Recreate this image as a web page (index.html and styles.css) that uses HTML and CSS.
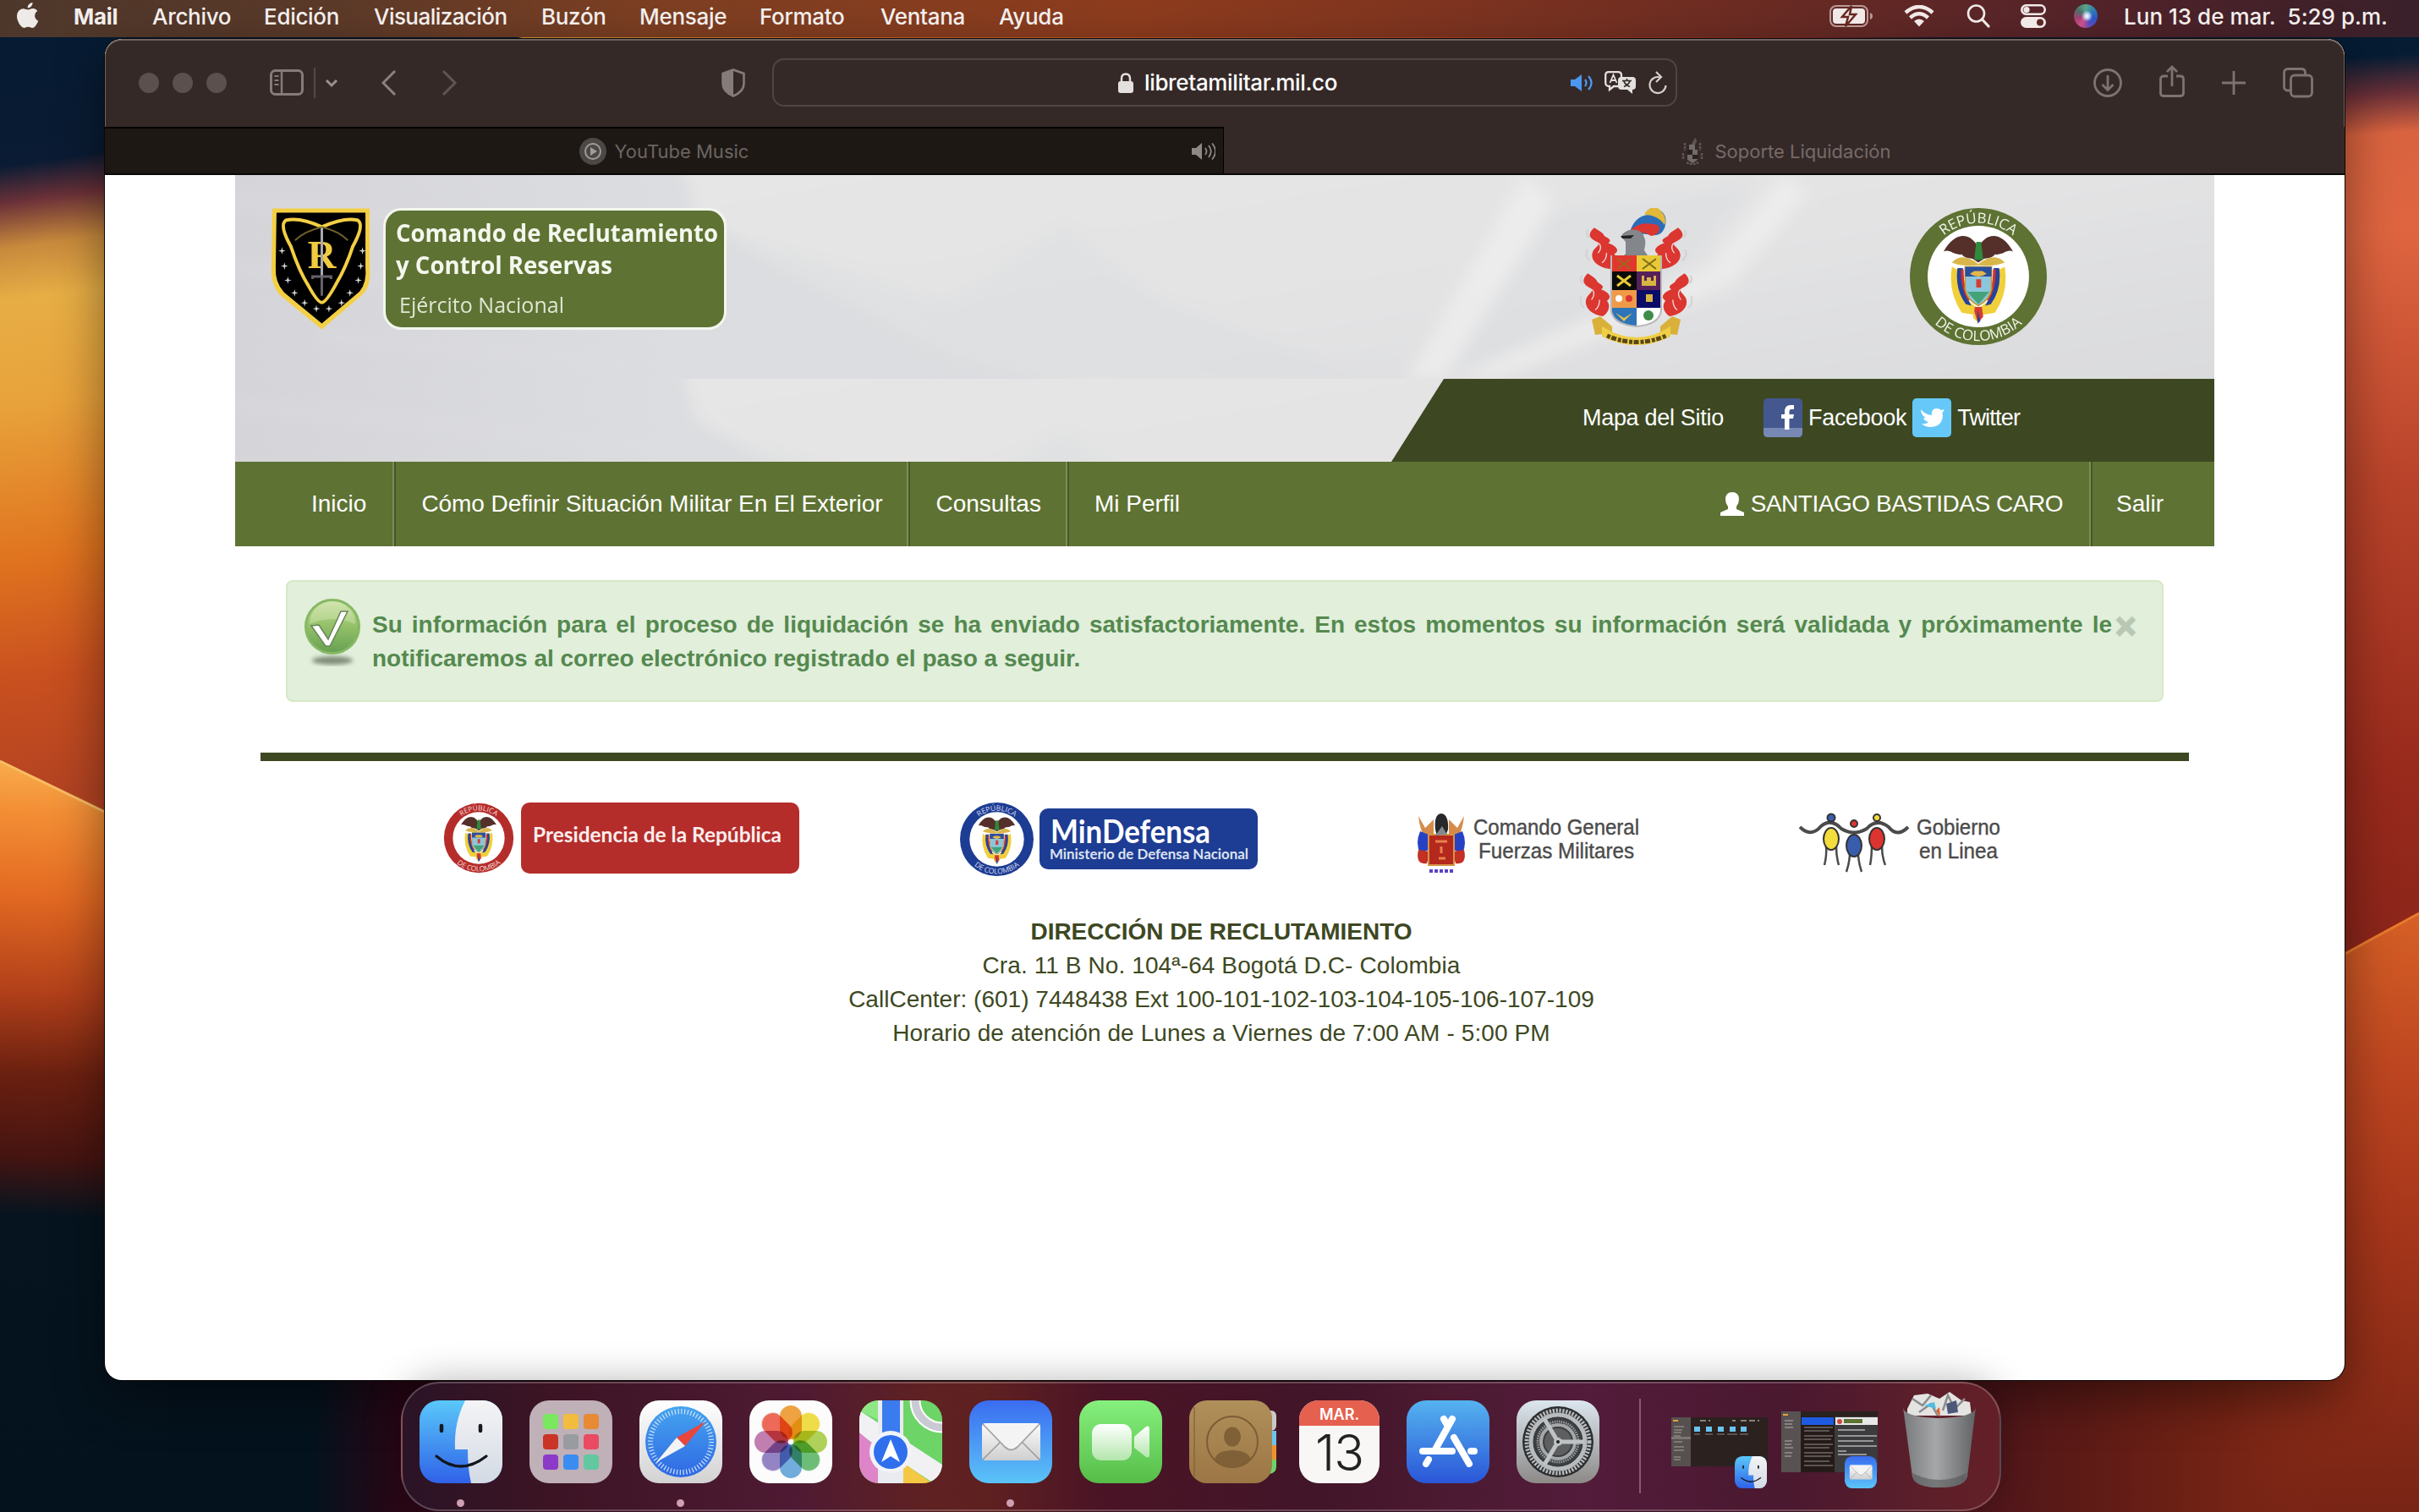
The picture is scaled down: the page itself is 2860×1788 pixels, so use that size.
FILE: index.html
```
<!DOCTYPE html>
<html lang="es">
<head>
<meta charset="utf-8">
<title>Soporte Liquidación</title>
<link rel="stylesheet" href="styles.css">
</head>
<body>
<svg class="wallpaper" viewBox="0 0 2860 1788" preserveAspectRatio="none" aria-hidden="true">
  <defs>
    <linearGradient id="wl" x1="0" y1="0" x2="0" y2="1788" gradientUnits="userSpaceOnUse">
      <stop offset="0" stop-color="#051c33"/><stop offset=".11" stop-color="#0a1b33"/><stop offset=".135" stop-color="#6b3138"/><stop offset=".165" stop-color="#c88a3c"/><stop offset=".2" stop-color="#e7ae45"/><stop offset=".27" stop-color="#e8a23b"/><stop offset=".37" stop-color="#e0741f"/><stop offset=".45" stop-color="#c9501f"/><stop offset=".53" stop-color="#b34322"/><stop offset="1" stop-color="#b34322"/>
    </linearGradient>
    <linearGradient id="wl2" x1="0" y1="905" x2="-40" y2="1788" gradientUnits="userSpaceOnUse">
      <stop offset="0" stop-color="#f8a94a"/><stop offset=".06" stop-color="#f38e35"/><stop offset=".17" stop-color="#e36a22"/><stop offset=".3" stop-color="#b2401a"/><stop offset=".41" stop-color="#6b2010"/><stop offset=".52" stop-color="#461411"/><stop offset=".6" stop-color="#06141f"/><stop offset="1" stop-color="#04121d"/>
    </linearGradient>
    <linearGradient id="wr" x1="2760" y1="0" x2="2840" y2="1150" gradientUnits="userSpaceOnUse">
      <stop offset="0" stop-color="#051c33"/><stop offset=".06" stop-color="#051c33"/><stop offset=".1" stop-color="#6b3038"/><stop offset=".14" stop-color="#d9633f"/><stop offset=".24" stop-color="#df6540"/><stop offset=".5" stop-color="#b8432a"/><stop offset=".8" stop-color="#982a1c"/><stop offset="1" stop-color="#8a241a"/>
    </linearGradient>
    <linearGradient id="wr2" x1="0" y1="1080" x2="0" y2="1788" gradientUnits="userSpaceOnUse">
      <stop offset="0" stop-color="#d66026"/><stop offset=".25" stop-color="#bf4721"/><stop offset=".5" stop-color="#a8371b"/><stop offset="1" stop-color="#782415"/>
    </linearGradient>
    <linearGradient id="wt" x1="0" x2="2860" y1="0" y2="0" gradientUnits="userSpaceOnUse">
      <stop offset="0" stop-color="#051c33"/><stop offset=".214" stop-color="#051c33"/><stop offset=".216" stop-color="#d99a3a"/><stop offset=".35" stop-color="#cf6a2a"/><stop offset=".6" stop-color="#b54424"/><stop offset=".75" stop-color="#7a2622"/><stop offset=".8" stop-color="#1c1a30"/><stop offset="1" stop-color="#051c33"/>
    </linearGradient>
    <linearGradient id="wb" x1="0" x2="2860" y1="0" y2="0" gradientUnits="userSpaceOnUse">
      <stop offset="0" stop-color="#04121d"/><stop offset=".13" stop-color="#04121d"/><stop offset=".165" stop-color="#2a0716"/><stop offset=".3" stop-color="#4a1227"/><stop offset=".4" stop-color="#641c1c"/><stop offset=".5" stop-color="#32101f"/><stop offset=".65" stop-color="#42122e"/><stop offset=".8" stop-color="#4c151f"/><stop offset=".86" stop-color="#5c1a16"/><stop offset=".92" stop-color="#742314"/><stop offset=".965" stop-color="#802817" stop-opacity="0"/>
    </linearGradient>
  </defs>
  <rect width="2860" height="1788" fill="#04121d"/>
  <rect width="1430" height="1000" fill="url(#wl)" transform="skewY(-8)"/>
  <path d="M0 900 260 1026V1788H0z" fill="url(#wl2)"/>
  <path d="M0 900 260 1026" stroke="#f9bd62" stroke-width="3"/>
  <rect x="2600" width="260" height="1788" fill="url(#wr)"/>
  <path d="M2600 1222 2860 1080V1788H2600z" fill="url(#wr2)"/>
  <path d="M2600 1222 2860 1080" stroke="#ea7a2c" stroke-width="3"/>
  <rect x="124" width="2500" height="60" fill="url(#wt)"/>
  <rect x="200" y="1610" width="2560" height="178" fill="url(#wb)"/>
</svg>

<svg class="defs" width="0" height="0" aria-hidden="true">
  <defs>
    <linearGradient id="gBlue" x2="0" y2="1"><stop stop-color="#5ac8fa"/><stop offset="1" stop-color="#2f62e8"/></linearGradient>
    <linearGradient id="gWhite" x2="0" y2="1"><stop stop-color="#f4f4f6"/><stop offset="1" stop-color="#d3dae4"/></linearGradient>
    <linearGradient id="gMail" x2="0" y2="1"><stop stop-color="#3a6cf0"/><stop offset="1" stop-color="#5bc4f8"/></linearGradient>
    <linearGradient id="gEnv" x2="0" y2="1"><stop stop-color="#fcfcfc"/><stop offset="1" stop-color="#cfcfcf"/></linearGradient>
    <linearGradient id="gGreen" x2="0" y2="1"><stop stop-color="#86f07e"/><stop offset="1" stop-color="#56bd48"/></linearGradient>
    <linearGradient id="gCam" x2="0" y2="1"><stop stop-color="#fff"/><stop offset="1" stop-color="#b4e6ad"/></linearGradient>
    <linearGradient id="gStore" x2="0" y2="1"><stop stop-color="#55b3f0"/><stop offset="1" stop-color="#2a56d8"/></linearGradient>
    <linearGradient id="gSet" x2="0" y2="1"><stop stop-color="#dbe6ee"/><stop offset="1" stop-color="#8d8a88"/></linearGradient>
    <linearGradient id="gSaf" x2="0" y2="1"><stop stop-color="#fff"/><stop offset="1" stop-color="#d2d2d2"/></linearGradient>
    <linearGradient id="gDial" x2="0" y2="1"><stop stop-color="#45a4ef"/><stop offset="1" stop-color="#2f68e4"/></linearGradient>
    <linearGradient id="gTan" x2="0" y2="1"><stop stop-color="#b0905a"/><stop offset="1" stop-color="#9c7645"/></linearGradient>
    <linearGradient id="gCan" x2="1" y2="0"><stop stop-color="#77797b"/><stop offset=".45" stop-color="#a5a7a8"/><stop offset="1" stop-color="#606264"/></linearGradient>
    <linearGradient id="gOk" x2="0" y2="1"><stop stop-color="#c9e0a0"/><stop offset=".45" stop-color="#97c36b"/><stop offset="1" stop-color="#66a052"/></linearGradient>
    <filter id="soft" x="-30%" y="-60%" width="160%" height="220%"><feGaussianBlur stdDeviation="2.5"/></filter>
    <clipPath id="tile"><rect width="98" height="98" rx="23"/></clipPath>
    <symbol id="finder" viewBox="0 0 98 98">
      <g clip-path="url(#tile)"><rect width="98" height="98" fill="url(#gBlue)"/>
      <path d="M54 0H98V98H61C58 85 57 72 57 58H42C41 36 45 18 54 0z" fill="url(#gWhite)"/></g>
      <path d="M26 30v6M72 30v6" stroke="#15191f" stroke-width="4.500" stroke-linecap="round"/>
      <path d="M20 66Q48 90 79 66" fill="none" stroke="#12161c" stroke-width="3.200" stroke-linecap="round"/>
    </symbol>
    <symbol id="mail" viewBox="0 0 98 98">
      <rect width="98" height="98" rx="23" fill="url(#gMail)"/>
      <rect x="15" y="27" width="69" height="44" rx="4" fill="url(#gEnv)"/>
      <path d="M16 70 37 49M83 70 62 49" stroke="#9a9a9a" stroke-width="1.500"/>
      <path d="M16 28 42 55Q49.500 62 57 55L83 28" fill="#f4f4f4" stroke="#a5a5a5" stroke-width="1.800"/>
    </symbol>
    <symbol id="arms" viewBox="0 0 100 140">
      <path d="M50 24C40 4 18 -2 0 30 10 26 14 36 26 34 32 42 40 38 44 42L50 46 56 42C60 38 68 42 74 34 86 36 90 26 100 30 82 -2 60 4 50 24z" fill="#55302a"/>
      <path d="M47 16h7l3 26H44z" fill="#2f8a3c"/>
      <path d="M12 46Q26 30 50 48 74 30 88 46 74 52 50 50 26 52 12 46z" fill="#d9b64a"/>
      <path d="M12 52Q6 88 26 118L50 122 74 118Q94 88 88 52L72 60V96L50 112 28 96V60z" fill="#f0cf3a"/>
      <path d="M20 54Q16 84 32 106L40 108Q26 84 28 54zM80 54Q84 84 68 106L60 108Q74 84 72 54z" fill="#24439c"/>
      <path d="M27 56Q26 82 37 100M73 56Q74 82 63 100" stroke="#cf3030" stroke-width="4" fill="none"/>
      <path d="M31 52H69V84Q66 100 50 108 34 100 31 84z" fill="#8cc6dc" stroke="#c59a36" stroke-width="2"/>
      <path d="M31 52H69V66H31z" fill="#2a4f9e"/><path d="M38 62Q50 70 62 62L56 58H44z" fill="#e2b74a"/>
      <path d="M47 70h7v12h-7z" fill="#d63a32"/><path d="M34 88H66L50 106z" fill="#44a377"/>
      <path d="M45 110h10l2 14-7 8-7-8z" fill="#d63a32"/><path d="M43 112l6 20-6-6z" fill="#f0cf3a"/><path d="M49 114v20l4-4z" fill="#24439c"/>
    </symbol>
    <path id="ringTop" d="M22 100A78 78 0 0 1 178 100"/>
    <path id="ringBottom" d="M6 100A94 94 0 0 0 194 100"/>
    <symbol id="star" viewBox="-5 -5 10 10"><path d="M0-4 .8-.8 4 0 .8.8 0 4-.8.8-4 0-.8-.8z" fill="#d9dadc"/></symbol>
    <symbol id="flame" viewBox="0 0 44 80" preserveAspectRatio="none">
      <path d="M12 2C2 14 6 22 16 28 22 32 12 38 10 46 6 60 16 74 32 77 40 72 44 58 38 50 48 42 36 32 30 30 38 22 24 20 24 14 20 8 16 6 12 2z" fill="#dc3630"/>
      <path d="M4 6q-4 8 2 14M3 42q-4 12 4 20" stroke="#d4d4d4" stroke-width="3" fill="none"/>
      <path d="M18 30q5 8-1 18M28 48q0 12-6 18" stroke="#f3e0df" stroke-width="1.500" fill="none"/>
    </symbol>
    <symbol id="speaker" viewBox="0 0 28 22"><path d="M0 7h5L12 1v20L5 15H0z"/><path d="M16 7q3 4 0 8M20 4q5.500 7 0 14M24 1.500q8 9.500 0 19" fill="none" stroke="currentColor" stroke-width="1.800"/></symbol>
  </defs>
</svg>

<header class="menubar">
  <svg class="apple" viewBox="0 0 26 32"><path d="M18.500 0c.3 3.500-2.600 6.600-5.800 6.500C12.300 3.300 15.300.3 18.500 0zM13.400 8.600c1.400 0 3-1.500 5.400-1.500 2.200.1 4.300 1.200 5.500 3-4.700 3-3.900 9.600.9 11.600-1 2.700-4 8.300-7 8.300-2 0-2.700-1.200-4.900-1.200S10.400 30 8.500 30C4.600 30 0 22 0 16.600 0 10.700 3.700 7.400 7.300 7.300c2.300 0 4.500 1.300 6.100 1.300z" fill="#eeeae8"/></svg>
  <nav class="menus">
    <b>Mail</b><span>Archivo</span><span>Edición</span><span class="tight">Visualización</span><span>Buzón</span><span>Mensaje</span><span>Formato</span><span>Ventana</span><span>Ayuda</span>
  </nav>
  <div class="status">
    <svg width="52" height="26" viewBox="0 0 52 26"><rect x="1" y="1" width="44" height="24" rx="7" fill="none" stroke="#b79a97" stroke-width="2"/><rect x="4" y="4" width="38" height="18" rx="4" fill="#f1e9e8"/><path d="M48 9v8q3-1 3-4t-3-4z" fill="#b79a97"/><path d="M26 1 15 14h7l-3 11 12-14h-7z" fill="#f1e9e8" stroke="#67281f" stroke-width="2.500"/></svg>
    <svg width="36" height="26" viewBox="0 0 36 26"><path d="M2 9Q18-5 34 9M7.500 15Q18 5.500 28.500 15" stroke="#f1e9e8" stroke-width="4.500" fill="none"/><path d="M12 19q6-5 12 0l-6 6.500z" fill="#f1e9e8"/></svg>
    <svg width="28" height="28" viewBox="0 0 28 28" fill="none" stroke="#f1e9e8"><circle cx="11.500" cy="11" r="9.500" stroke-width="2.600"/><path d="M18.500 18 26 26" stroke-width="3.200" stroke-linecap="round"/></svg>
    <svg width="30" height="28" viewBox="0 0 30 28"><rect x="1.300" y="1.300" width="27.400" height="10.400" rx="5.200" fill="none" stroke="#f1e9e8" stroke-width="2.600"/><circle cx="7" cy="6.500" r="3.600" fill="#f1e9e8"/><rect y="15" width="30" height="13" rx="6.500" fill="#f1e9e8"/><circle cx="23" cy="21.500" r="4" fill="#5d2726"/></svg>
    <i class="siri"></i>
    <span class="clock">Lun 13 de mar.&nbsp; 5:29 p.m.</span>
  </div>
</header>

<main class="window">
  <div class="toolbar">
    <div class="lights"><i></i><i></i><i></i></div>
    <svg class="tb-side" viewBox="0 0 82 36" fill="none" stroke="#81777a"><g stroke="#857b79"><rect x="1.500" y="3.500" width="37" height="28" rx="5" stroke-width="3"/><path d="M14 4v27" stroke-width="2.500"/><path d="M5.500 10h5M5.500 15h5M5.500 20h5" stroke-width="2"/></g><path d="M53 0v36" stroke="#53484a" stroke-width="2"/><path d="M67 15l6 6 6-6" stroke="#9a908e" stroke-width="3"/></svg>
    <svg class="tb-nav" viewBox="0 0 90 30" fill="none" stroke-width="3"><path d="M16 1 2 15 16 29" stroke="#8a807e"/><path d="M73 1 87 15 73 29" stroke="#5f5452"/></svg>
    <svg class="tb-shield" viewBox="0 0 28 34"><path d="M14 1.500 26.500 6V18q0 9-12.500 14.500Q1.500 27 1.500 18V6z" fill="none" stroke="#857b79" stroke-width="2.600"/><path d="M14 1.500V32.500Q1.500 27 1.500 18V6z" fill="#857b79"/></svg>
    <div class="urlbar">
      <svg class="lock" viewBox="0 0 18 24"><rect y="10" width="18" height="14" rx="3" fill="#e4e0df"/><path d="M4 11V7q0-5.500 5-5.500T14 7v4" fill="none" stroke="#e4e0df" stroke-width="2.400"/></svg>
      <span>libretamilitar.mil.co</span>
      <div class="urlicons">
        <svg width="28" height="22" viewBox="0 0 28 22" fill="#4b97f3"><path d="M0 7h5L13 1v20L5 15H0z"/><path d="M17 7q3 4 0 8M21 3q7 8 0 16" fill="none" stroke="#4b97f3" stroke-width="2.200"/></svg>
        <svg width="37" height="27" viewBox="0 0 37 27"><path d="M5 1.200H16Q20 1.200 20 5V15Q20 18 16 18H11L6 22V18Q1.200 18 1.200 14V5Q1.200 1.200 5 1.200z" fill="none" stroke="#e4e0df" stroke-width="2.300"/><path d="M6.500 14 10.500 4.500 14.500 14M8 11h5" stroke="#e4e0df" stroke-width="1.800" fill="none"/><path d="M20 7H33Q37 7 37 11V18Q37 22 33 22V27L27 22H20Q16 22 16 18V11Q16 7 20 7z" fill="#e4e0df"/><path d="M21 11.500H32M26.500 9v2.500M23 18.500Q29 16 30 11.500M23 12q1.500 4.500 7 6.500" stroke="#352928" stroke-width="1.700" fill="none"/></svg>
        <svg width="22" height="28" viewBox="0 0 22 28" fill="none" stroke="#d5cfce" stroke-width="2.200"><path d="M14 7.500A9.500 9.500 0 1 0 20.500 17"/><path d="M9 1l6 6-6 6"/></svg>
      </div>
    </div>
    <div class="tb-right">
      <svg width="34" height="34" viewBox="0 0 34 34"><circle cx="17" cy="17" r="15.500"/><path d="M17 8v17M10.500 19l6.500 6.500 6.500-6.500"/></svg>
      <svg class="share" width="30" height="38" viewBox="0 0 30 38"><path d="M10 13H5Q1.500 13 1.500 16.500V33Q1.500 36.500 5 36.500H25Q28.500 36.500 28.500 33V16.500Q28.500 13 25 13H20M15 25V2M9 8l6-6 6 6"/></svg>
      <svg width="28" height="28" viewBox="0 0 28 28"><path d="M14 0V28M0 14H28"/></svg>
      <svg width="36" height="36" viewBox="0 0 36 36"><path d="M9 27H6Q1.500 27 1.500 22.500V6Q1.500 1.500 6 1.500H22Q26.500 1.500 26.500 6V9"/><rect x="9.500" y="9" width="25" height="25" rx="4.500"/></svg>
    </div>
  </div>
  <div class="tabs">
    <div class="tab tab-a">
      <svg width="32" height="32" viewBox="0 0 32 32"><circle cx="16" cy="16" r="16" fill="#4c4845"/><circle cx="16" cy="16" r="9" fill="none" stroke="#a09c9a" stroke-width="2"/><path d="M13 11v10l8-5z" fill="#a09c9a"/></svg>
      <span>YouTube Music</span>
      <svg class="sound" width="28" height="22" fill="#8e8986" color="#8e8986"><use href="#speaker"/></svg>
    </div>
    <div class="tab tab-b">
      <svg width="26" height="32" viewBox="0 0 26 32"><path d="M16 0q4 3 0 8l-5 1z" fill="#5a5554"/><path d="M9 8h7v6H9zM7 14h12v12l-6 4-6-4z" fill="#716b6a"/><path d="M7 14h6v6H7zM13 20h6v5h-6z" fill="#2a2120"/><path d="M4 6v9M22 6v9M2 18v8M24 18v8M6 29q7 4 14 0" stroke="#5d5655" stroke-width="2.500" fill="none" stroke-dasharray="3 1"/></svg>
      <span>Soporte Liquidación</span>
    </div>
  </div>

  <div class="site">
    <header class="banner">
      <svg class="banner-bg" viewBox="0 0 2340 339" preserveAspectRatio="none" aria-hidden="true">
        <defs>
          <linearGradient id="bg1" x2="1" y2="0"><stop stop-color="#d5d5d9"/><stop offset=".22" stop-color="#dcdde0"/><stop offset="1" stop-color="#dcdddf"/></linearGradient>
          <linearGradient id="bg2" x2="1" y2="1"><stop stop-color="#e6e6e6"/><stop offset=".5" stop-color="#e3e3e4"/><stop offset="1" stop-color="#d8d9dc"/></linearGradient>
          <filter id="fold" x="-5%" y="-20%" width="110%" height="140%"><feGaussianBlur stdDeviation="9"/></filter>
          <clipPath id="band"><rect width="2340" height="241"/></clipPath>
        </defs>
        <g id="folds" clip-path="url(#band)"><rect width="2340" height="241" fill="url(#bg1)"/>
          <g filter="url(#fold)">
            <path d="M0 30 500 80M0 110 500 160M100 190 480 225" stroke="#dfdfe3" stroke-width="14" opacity=".4"/>
            <path d="M520 -40H2400V290H1150L860 215 640 110 545 50z" fill="url(#bg2)"/>
            <path d="M560 60 700 150 860 241H1340L1100 150 980 60 840 150z" fill="#dcdddf" opacity=".5"/>
            <path d="M1525 0 1385 241H1430L1560 30zM1830 0 1740 110 1440 241H1490L1770 130 1860 20z" fill="#efefef" opacity=".7"/>
            <path d="M1560 40 1430 241 1700 120 1800 10z" fill="#dcdddf" opacity=".5"/>
          </g>
        </g>
        <use href="#folds" y="241"/>
      </svg>
      <div class="brand-row">
        <svg class="rshield" viewBox="0 0 120 144">
          <path d="M2 0H118V70Q120 92 110 102L61 144 12 104Q0 92 1 70z" fill="#f3cf43"/><path d="M7 5H113V70Q115 88 106 99L61 137 16 100Q5 88 6 70z" fill="#000"/>
          <path d="M61 22Q35 10 18 14 10 20 24 45 34 75 45 92 56 112 61 112 66 112 78 90 90 70 98 45 112 20 104 14 88 10 61 22Z" fill="none" stroke="#f3cf43" stroke-width="4"/>
          <path d="M61 22Q40 27 29 38M61 22Q82 27 92 38" stroke="#6f602c" stroke-width="2" fill="none"/>
          <text x="61" y="71" font-family="Liberation Serif, serif" font-weight="700" font-size="47" text-anchor="middle" fill="#f0cb42">R</text>
          <path d="M61 23v60" stroke="#aaa9ae" stroke-width="3"/><path d="M61 80v24M50 84v-3h22v3" stroke="#66616a" stroke-width="3" fill="none"/>
          <g><use href="#star" x="8" y="45" width="11" height="11"/><use href="#star" x="11" y="63" width="11" height="11"/><use href="#star" x="15" y="80" width="11" height="11"/><use href="#star" x="23" y="95" width="11" height="11"/><use href="#star" x="35" y="107" width="11" height="11"/><use href="#star" x="49" y="114" width="11" height="11"/><use href="#star" x="64" y="114" width="11" height="11"/><use href="#star" x="79" y="107" width="11" height="11"/><use href="#star" x="89" y="95" width="11" height="11"/><use href="#star" x="99" y="80" width="11" height="11"/><use href="#star" x="102" y="63" width="11" height="11"/><use href="#star" x="104" y="45" width="11" height="11"/></g>
        </svg>
        <svg class="brand" viewBox="0 0 406 144"><rect x="1.500" y="1.500" width="403" height="141" rx="20" fill="#5e7233" stroke="#f3f6ee" stroke-width="3"/>
          <g fill="#f4f7ee" font-family="Open Sans, sans-serif"><text x="15" y="40" font-size="28" font-weight="700" textLength="381" lengthAdjust="spacingAndGlyphs">Comando de Reclutamiento</text><text x="15" y="78" font-size="28" font-weight="700" textLength="256" lengthAdjust="spacingAndGlyphs">y Control Reservas</text><text x="19" y="124" font-size="25" fill="#dfe6d2" textLength="195" lengthAdjust="spacingAndGlyphs">Ejército Nacional</text></g></svg>
        <svg class="army" viewBox="0 0 133 162">
          <path d="M60 25Q66 10 80 8 78 0 88 0 104 4 101 20 98 34 84 32 70 28 60 36z" fill="#2b6db8"/><path d="M76 8Q80-2 92 0 104 10 100 20 92 8 76 8z" fill="#e2b93a"/><path d="M58 28Q70 14 92 20 98 30 84 33 72 24 58 36z" fill="#dc3630"/>
          <path d="M54 54V40Q48 34 50 31 60 22 72 28 80 36 76 50L80 56H52z" fill="#83868a"/><path d="M48 33 64 32 60 36H50z" fill="#222"/>
          <use href="#flame" x="6" y="22" width="40" height="52"/><use href="#flame" x="-1" y="76" width="38" height="54"/>
          <g transform="matrix(-1 0 0 1 133 0)"><use href="#flame" x="6" y="22" width="40" height="52"/><use href="#flame" x="-1" y="76" width="38" height="54"/></g>
          <g><path d="M37 56H67V75H37z" fill="#e2372f"/><path d="M67 56H96V75H67z" fill="#e9ca36"/><path d="M37 75H67V97H37z" fill="#0a0a0a"/><path d="M67 75H96V97H67z" fill="#56205c"/><path d="M37 97H67V118H37z" fill="#f09a48"/><path d="M67 97H96V118H67z" fill="#0b0c68"/><path d="M37 118H67V140Q40 136 37 122z" fill="#2e74b8"/><path d="M67 118H96Q96 136 67 140z" fill="#fff"/></g>
          <g stroke-width="2"><path d="M44 60 60 72M60 60 44 72" stroke="#9a6a1c"/><path d="M74 60 90 72M90 60 74 72" stroke="#7d6a1c"/><path d="M44 80 60 92M60 80 44 92" stroke="#e9ca36" stroke-width="3"/></g>
          <path d="M73 92V80h3v6h3v-4h5v4h3v-6h3v12zM78 102h8v9h-8z" fill="#d8b442"/><circle cx="46" cy="107" r="4" fill="#fff"/><circle cx="58" cy="107" r="4" fill="#d33"/><path d="M42 124 52 130 62 124 52 134z" fill="#e2c14a"/><circle cx="81" cy="127" r="6" fill="#3f8c4b"/>
          <path d="M37 56V122Q40 138 67 140 93 138 96 122V56" stroke="#b8b8b8" stroke-width="2" fill="none"/>
          <path d="M14 132 24 128 38 140 38 148 18 150zM119 132 109 128 95 140 95 148 115 150z" fill="#d9b13a"/><path d="M26 140Q67 166 107 140V152Q67 172 26 152z" fill="#efcf48"/><path d="M32 151Q67 166 102 151" stroke="#5a4716" stroke-width="5" stroke-dasharray="4 1.500 6 2" fill="none"/>
        </svg>
        <svg class="seal" viewBox="0 0 200 200"><circle cx="100" cy="100" r="100" fill="#5e7233"/><circle cx="100" cy="100" r="74" fill="#fff"/><g fill="#f1f4ea" font-family="Open Sans, sans-serif" font-size="21"><text text-anchor="middle"><textPath href="#ringTop" startOffset="50%">REPÚBLICA</textPath></text><text text-anchor="middle"><textPath href="#ringBottom" startOffset="50%">DE COLOMBIA</textPath></text></g><use href="#arms" x="34" y="33" width="132" height="142"/></svg>
      </div>
      <div class="social">
        <a>Mapa del Sitio</a>
        <svg class="fb" viewBox="0 0 46 46"><rect width="46" height="46" rx="5" fill="#44588f"/><path d="M0 35H46V41Q46 46 41 46H5Q0 46 0 41z" fill="#7788b5"/><path d="M25 37V24h-4v-5h4v-3q0-8 7-8h4v5h-3q-2.500 0-2.500 3v3h5.500l-1 5h-4.500v13z" fill="#fff"/></svg>
        <a>Facebook</a>
        <svg class="tw" viewBox="0 0 46 46"><rect width="46" height="46" rx="5" fill="#66c8f9"/><path d="M10 13q6 7 13 7-1-8 6-8 3 0 5 2l4-1-3 5 1 1q0 14-14 15-7 0-11-4 5 1 8-2-5-1-6-5h3q-6-3-6-10z" fill="#fff"/></svg>
        <a class="tight">Twitter</a>
      </div>
    </header>
    <nav class="mainnav">
      <a class="item">Inicio</a><a class="item wide">Cómo Definir Situación Militar En El Exterior</a><a class="item">Consultas</a><a class="item last">Mi Perfil</a>
      <span class="grow"></span>
      <a class="item user"><svg viewBox="0 0 28 28"><path d="M14 0q8 0 8 8.500 0 4.500-3 8.500v3l9 4v4H0v-4l9-4v-3Q6 13 6 8.500 6 0 14 0z" fill="#fff"/></svg>SANTIAGO BASTIDAS CARO</a><a class="item last">Salir</a>
    </nav>
    <section class="alert">
      <svg class="ok" viewBox="0 0 66 80"><ellipse cx="33" cy="73" rx="24" ry="5" fill="#7f8d79" filter="url(#soft)"/><circle cx="33" cy="33" r="31.500" fill="url(#gOk)" stroke="#86b863" stroke-width="3"/><path d="M6 30A27 27 0 0 1 60 30Q33 18 6 30z" fill="#e1edc6" opacity=".35"/><path d="M8 32 17 31 28 48 43 15 51 15 30 56 25 56z" fill="#fff" stroke="#67855a" stroke-width="1.500"/></svg>
      <p>Su información para el proceso de liquidación se ha enviado satisfactoriamente. En estos momentos su información será validada y próximamente le notificaremos al correo electrónico registrado el paso a seguir.</p>
      <b class="close">×</b>
    </section>
    <hr class="rule">
    <div class="logos">
      <svg class="l1" viewBox="0 0 421 88"><g transform="translate(0 2) scale(.42)"><circle cx="100" cy="100" r="98" fill="#b52d2b"/><circle cx="100" cy="100" r="73" fill="#fff"/><g fill="#f6dcda" font-family="Open Sans, sans-serif" font-size="20"><text text-anchor="middle"><textPath href="#ringTop" startOffset="50%">REPÚBLICA</textPath></text><text text-anchor="middle"><textPath href="#ringBottom" startOffset="50%">DE COLOMBIA</textPath></text></g><use href="#arms" x="34" y="33" width="132" height="140"/></g><rect x="92" y="2" width="329" height="84" rx="10" fill="#b52d2b"/><text x="106" y="49" font-family="Lato, sans-serif" font-weight="700" font-size="25" fill="#fbeeee" textLength="294" lengthAdjust="spacingAndGlyphs">Presidencia de la República</text></svg>
      <svg class="l2" viewBox="0 0 352 88"><g transform="scale(.435)"><circle cx="100" cy="100" r="100" fill="#1d3c93"/><circle cx="100" cy="100" r="74" fill="#fff"/><g fill="#d8def0" font-family="Open Sans, sans-serif" font-size="20"><text text-anchor="middle"><textPath href="#ringTop" startOffset="50%">REPÚBLICA</textPath></text><text text-anchor="middle"><textPath href="#ringBottom" startOffset="50%">DE COLOMBIA</textPath></text></g><use href="#arms" x="34" y="33" width="132" height="140"/></g><rect x="94" y="7" width="258" height="72" rx="10" fill="#1d3c93"/><g fill="#fff" font-family="Lato, sans-serif"><text x="107" y="48" font-weight="700" font-size="38" textLength="189" lengthAdjust="spacingAndGlyphs">MinDefensa</text><text x="106" y="67" font-size="17" font-weight="700" fill="#dce2f2" textLength="235" lengthAdjust="spacingAndGlyphs">Ministerio de Defensa Nacional</text></g></svg>
      <svg class="l3" viewBox="0 0 264 72"><path d="M2 4Q4 24 12 32L20 26V8L10 18zM56 4Q54 24 46 32L38 26V8L48 18z" fill="#d58b4a"/><path d="M4 22Q-2 36 4 48L14 44V26zM54 22Q60 36 54 48L44 44V26z" fill="#2741c4"/><path d="M2 44Q-2 62 12 60L16 46zM56 44Q60 62 46 60L42 46z" fill="#c33024"/><path d="M22 20Q20 2 29 1 38 2 37 20L34 28H24z" fill="#26282b"/><path d="M14 26H44V62H14z" fill="#b4281d" stroke="#d79346" stroke-width="2"/><path d="M22 27 30 16 36 26z" fill="#85888c"/><path d="M22 34h14M26 54h8M29 40v8" stroke="#e8814a" stroke-width="3"/><path d="M15 69h29" stroke="#5a42c8" stroke-width="4" stroke-dasharray="4 2"/><g font-family="Liberation Sans, sans-serif" font-size="25" fill="#4b4b4b" stroke="#4b4b4b" stroke-width=".4"><text x="67" y="26" textLength="196" lengthAdjust="spacingAndGlyphs">Comando General</text><text x="73" y="54" textLength="184" lengthAdjust="spacingAndGlyphs">Fuerzas Militares</text></g></svg>
      <svg class="l4" viewBox="0 0 240 72"><g stroke="#333" stroke-width="2" fill="none"><path d="M1 17Q14 30 26 16 38 6 50 19 65 28 80 19 92 6 106 17 116 30 129 17" stroke="#4b4b4b" stroke-width="4"/><path d="M32 40Q33 50 30 62M44 40Q44 52 47 62M60 48Q60 58 56 70M70 48Q70 58 74 70M86 40Q86 52 84 62M98 40Q98 52 102 62" stroke="#4b4b4b" stroke-width="2.500"/><ellipse cx="38" cy="31" rx="9" ry="13" fill="#f4dc3c"/><ellipse cx="65" cy="39" rx="9" ry="13" fill="#3a5cad"/><ellipse cx="92" cy="31" rx="9" ry="13" fill="#dd342f"/><circle cx="38" cy="6" r="4.500" fill="#3a5cad"/><circle cx="65" cy="13" r="4" fill="#dd342f"/><circle cx="92" cy="6" r="4" fill="#f4dc3c"/></g><g font-family="Liberation Sans, sans-serif" font-size="25" fill="#4b4b4b" stroke="#4b4b4b" stroke-width=".4"><text x="139" y="26" textLength="99" lengthAdjust="spacingAndGlyphs">Gobierno</text><text x="142" y="54" textLength="93" lengthAdjust="spacingAndGlyphs">en Linea</text></g></svg>
    </div>
    <address class="contact">
      <b>DIRECCIÓN DE RECLUTAMIENTO</b>
      <span>Cra. 11 B No. 104ª-64 Bogotá D.C- Colombia</span>
      <span class="phone">CallCenter: (601) 7448438 Ext 100-101-102-103-104-105-106-107-109</span>
      <span>Horario de atención de Lunes a Viernes de 7:00 AM - 5:00 PM</span>
    </address>
  </div>
</main>

<footer class="dock">
  <div class="app on"><svg viewBox="0 0 98 98"><use href="#finder"/></svg></div>
  <div class="app"><div class="launchpad"><i class="c1"></i><i class="c2"></i><i class="c3"></i><i class="c4"></i><i class="c5"></i><i class="c6"></i><i class="c7"></i><i class="c8"></i><i class="c9"></i></div></div>
  <div class="app on"><svg viewBox="0 0 98 98"><rect width="98" height="98" rx="23" fill="url(#gSaf)"/><circle cx="49" cy="49" r="42" fill="url(#gDial)"/><circle cx="49" cy="49" r="36" fill="none" stroke="#cfe3fa" stroke-width="6" stroke-dasharray="1.200 2.570"/><path d="M78 25 54 54 44 44z" fill="#e8463c"/><path d="M20 73 44 44 54 54z" fill="#f4f4f4"/></svg></div>
  <div class="app"><svg viewBox="0 0 98 98"><rect width="98" height="98" rx="23" fill="#fcfcfc"/><g transform="translate(49 49)" class="petals"><rect x="-13" y="-43" width="26" height="40" rx="13" fill="#f09a2d"/><rect x="-13" y="-43" width="26" height="40" rx="13" fill="#f0dc34" transform="rotate(45)"/><rect x="-13" y="-43" width="26" height="40" rx="13" fill="#a9cf47" transform="rotate(90)"/><rect x="-13" y="-43" width="26" height="40" rx="13" fill="#5fb868" transform="rotate(135)"/><rect x="-13" y="-43" width="26" height="40" rx="13" fill="#62a5dc" transform="rotate(180)"/><rect x="-13" y="-43" width="26" height="40" rx="13" fill="#8a78c0" transform="rotate(225)"/><rect x="-13" y="-43" width="26" height="40" rx="13" fill="#bd70a8" transform="rotate(270)"/><rect x="-13" y="-43" width="26" height="40" rx="13" fill="#ee5a45" transform="rotate(315)"/></g></svg></div>
  <div class="app"><svg viewBox="0 0 98 98"><g clip-path="url(#tile)"><rect width="98" height="98" fill="#6dd467"/><path d="M0 0H24V24L0 12z" fill="#8fe684"/><path d="M0 12 98 76V98H88L0 40z" fill="#f1f1f4"/><path d="M0 38 24 58V98H0z" fill="#dd85c8"/><path d="M22 0H52V98H22z" fill="#e9ebf0"/><path d="M27 0H48V50H27z" fill="#3b7bf0"/><path d="M52 74 86 98H52z" fill="#f5c843"/><circle cx="98" cy="0" r="32" fill="none" stroke="#fff" stroke-width="13"/><circle cx="98" cy="0" r="32" fill="none" stroke="#c9cad3" stroke-width="9"/></g><circle cx="37" cy="61" r="25" fill="#f1f3f8"/><circle cx="37" cy="61" r="20" fill="#2f6fee"/><path d="M37 46 48 73 37 66 26 73z" fill="#fff"/></svg></div>
  <div class="app on"><svg viewBox="0 0 98 98"><use href="#mail"/></svg></div>
  <div class="app"><svg viewBox="0 0 98 98"><rect width="98" height="98" rx="23" fill="url(#gGreen)"/><rect x="15" y="28" width="47" height="43" rx="11" fill="url(#gCam)"/><path d="M65 43 79 31Q83 29 83 34V64Q83 69 79 67L65 56z" fill="url(#gCam)"/></svg></div>
  <div class="app"><svg viewBox="0 0 104 98"><rect x="80" y="12" width="23" height="24" rx="6" fill="#c9c9c9"/><rect x="80" y="36" width="23" height="17" fill="#6cc3ec"/><rect x="80" y="53" width="23" height="17" fill="#f0922c"/><path d="M80 70h23v8q0 8-8 9H80z" fill="#6cd46a"/><rect width="98" height="98" rx="21" fill="url(#gTan)"/><path d="M6 8V90" stroke="#80603a" stroke-width="2" opacity=".6"/><circle cx="51" cy="49" r="30" fill="none" stroke="#7c5d34" stroke-width="2"/><ellipse cx="51" cy="43" rx="10" ry="11.500" fill="#7f6037"/><path d="M30 69Q34 59 51 59T73 69Q63 79 51 79T30 69z" fill="#7f6037"/></svg></div>
  <div class="app cal"><b>MAR.</b><span>13</span></div>
  <div class="app"><svg viewBox="0 0 98 98"><rect width="98" height="98" rx="23" fill="url(#gStore)"/><g stroke="#fff" stroke-width="8" stroke-linecap="round"><path d="M54 22 34 58M44 22 48 29M56 44 74 75M19 60H54M76 60H80M26 70 23 75"/></g></svg></div>
  <div class="app"><svg viewBox="0 0 98 98"><rect width="98" height="98" rx="23" fill="url(#gSet)"/><circle cx="49" cy="49" r="42" fill="#2b2d2f"/><circle cx="49" cy="49" r="37" fill="none" stroke="#b8bbbd" stroke-width="5" stroke-dasharray="2.300 1.600"/><circle cx="49" cy="49" r="32" fill="none" stroke="#b8bbbd" stroke-width="5"/><circle cx="49" cy="49" r="29" fill="#3c3e40"/><circle cx="49" cy="49" r="24" fill="none" stroke="#989b9d" stroke-width="3" stroke-dasharray="1.500 1.200"/><circle cx="49" cy="49" r="20" fill="none" stroke="#a5a8aa" stroke-width="4"/><circle cx="49" cy="49" r="16" fill="#5d5f60"/><path d="M49 49H80M49 49 33 22M49 49 33 76" stroke="#c0c3c5" stroke-width="5"/><circle cx="49" cy="49" r="5" fill="#c0c3c5"/><circle cx="49" cy="49" r="2" fill="#222"/></svg></div>
  <i class="sep"></i>
  <div class="mini"><svg viewBox="0 0 114 98"><rect y="20" width="114" height="58" fill="#2b211e"/><rect y="20" width="23" height="58" fill="#56504f"/><path d="M2 24h6" stroke="#e6a23c" stroke-width="2"/><path d="M34 24h12M72 24h4M82 24h22" stroke="#a8a2a0" stroke-width="1.500" stroke-dasharray="7 3"/><path d="M3 31h12M3 35h10M3 38h9M3 42h8M3 49h10M3 55h12M3 59h12M3 67h8M3 70h8" stroke="#a5a09e" stroke-width="1.200"/><path d="M0 43h23v3H0z" fill="#7b7573"/><g fill="#6bc3ef"><path d="M27 31h7v6h-7zM41 31h7v6h-7zM55 31h7v6h-7zM69 31h7v6h-7zM82 31h7v6h-7z"/></g><path d="M27 40h7M40 40h9M54 40h9M66 40h12M81 40h10" stroke="#8a8381" stroke-width="1.200"/><use href="#finder" x="75" y="66" width="38" height="38"/></svg></div>
  <div class="mini"><svg viewBox="0 0 114 98"><rect y="13" width="114" height="72" fill="#3c3b3d"/><rect y="13" width="23" height="72" fill="#585252"/><rect x="23" y="13" width="40" height="72" fill="#241b18"/><rect x="23" y="13" width="91" height="6" fill="#2b211e"/><rect x="24" y="20" width="38" height="9" fill="#1f5be0"/><rect x="64" y="20" width="50" height="9" fill="#e8e8e8"/><rect x="74" y="22" width="22" height="5" fill="#5e7233"/><circle cx="69" cy="25" r="3" fill="#c84b40"/><path d="M2 17h6" stroke="#e6a23c" stroke-width="2"/><path d="M27 32h34M27 36h30M27 42h34M27 46h32M27 52h34M27 56h30M27 62h34M27 66h32M27 72h30M27 77h34" stroke="#6f6966" stroke-width="1.500"/><path d="M67 35h32M67 42h46M67 48h42M67 54h46M67 60h10M67 64h34" stroke="#b4b4b4" stroke-width="1.300"/><path d="M4 24h10M4 28h9M4 32h10M4 48h9M4 52h8M4 56h10M4 62h9M4 66h8" stroke="#b5b1b0" stroke-width="1.200"/><use href="#mail" x="75" y="66" width="38" height="38"/></svg></div>
  <div class="trash"><svg viewBox="0 0 88 114"><path d="M6 20 14 4 30 2 44 8 56 0 70 10 80 12 82 28H6z" fill="#e4e4e2"/><path d="M12 8 24 16 34 4M48 22 54 4 62 20 74 8M20 24l14-10 8 14" stroke="#8a8c8e" stroke-width="2.500" fill="none"/><path d="M26 16l12-4 2 8z" fill="#4fbde0"/><path d="M52 14l12-4 2 14-12 2z" fill="#4c5878"/><path d="M40 22l4-4 1 12z" fill="#d8652e"/><path d="M1 18Q2 30 44 31 86 30 87 18L77 100Q74 113 44 113 15 113 12 100z" fill="url(#gCan)"/><path d="M12 96Q44 112 76 96L75 104Q70 113 44 113 18 113 13 104z" fill="#505254" opacity=".55"/></svg></div>
</footer>
</body>
</html>
```

FILE: styles.css
```
* { box-sizing: border-box; }

body {
  margin: 0;
  width: 2860px;
  height: 1788px;
  overflow: hidden;
  position: relative;
  background: #04121d;
  font-family: "Liberation Sans", Arial, sans-serif;
}

svg { display: block; flex: none; }

.wallpaper { position: absolute; inset: 0; width: 2860px; height: 1788px; z-index: -1; }
.defs { position: absolute; }

/* System menu bar */
.menubar {
  height: 44px;
  padding: 0 36px 6px 20px;
  display: flex;
  align-items: center;
  background: linear-gradient(90deg, #4d372b 0, #5c3a29 400px, #7d3f22 760px, #8e3c1e 1340px, #84371f 1600px, #6d2c23 2050px, #55242a 2450px, #39202a 2860px);
  color: #f3eeec;
  font: 500 26px Inter, sans-serif;
}
.apple { width: 26px; height: 32px; }
.menus {
  margin-left: 41px;
  display: grid;
  grid-template-columns: 93px 132px 130px 198px 116px 142px 143px 140px 100px;
  letter-spacing: -.3px;
}
.menus .tight { letter-spacing: -.55px; }
.status { margin-left: auto; display: flex; align-items: center; }
.status svg:nth-child(1) { margin-right: 36px; }
.status svg:nth-child(2) { margin-right: 38px; }
.status svg:nth-child(3) { margin-right: 36px; }
.status svg:nth-child(4) { margin-right: 33px; }
.siri {
  width: 28px; height: 28px; border-radius: 50%; margin-right: 31px;
  background: radial-gradient(circle at 55% 50%, #fff 0, #c9d9f4 12%, transparent 32%), conic-gradient(#5aa58c, #2d7eb0, #2b55c8, #574bb8, #d04f88, #a04070, #4b6f68, #5aa58c);
}
.clock { letter-spacing: .02px; white-space: nowrap; width: 313px; }

/* Browser window */
.window {
  width: 2648px;
  height: 1586px;
  margin: 2px 0 0 124px;
  border-radius: 20px;
  overflow: hidden;
  background: #fff;
  box-shadow: 0 0 0 1px #0a0606, 0 20px 60px rgba(0, 0, 0, .45);
}
.toolbar {
  height: 104px;
  background: #352928;
  border: 2px solid #6e6462;
  border-width: 2px 1px 0;
  border-radius: 20px 20px 0 0;
  display: flex;
  align-items: center;
  padding: 0 0 3px 39px;
}
.lights { display: flex; gap: 16px; }
.lights i { width: 24px; height: 24px; border-radius: 50%; background: #5c504e; }
.tb-side { width: 82px; height: 36px; margin-left: 51px; }
.tb-nav { width: 90px; height: 30px; margin-left: 50px; }
.tb-shield { width: 28px; height: 34px; margin-left: 312px; }
.urlbar {
  width: 1070px;
  height: 57px;
  margin-left: 32px;
  border: 2px solid #504543;
  border-radius: 14px;
  display: flex;
  align-items: center;
  color: #fff;
  font: 500 26px Inter, sans-serif;
  letter-spacing: -.35px;
}
.lock { width: 18px; height: 24px; margin: 0 13px 0 407px; }
.urlbar span { width: 228px; white-space: nowrap; }
.urlicons { display: flex; align-items: center; gap: 12px; margin-left: 276px; }
.urlicons svg:last-child { margin-left: 3px; }
.tb-right { display: flex; align-items: center; gap: 44px; margin-left: 492px; fill: none; stroke: #7d7371; stroke-width: 2.8px; }
.share { margin-bottom: 4px; }

.tabs { display: flex; height: 57px; border-bottom: 2px solid #0a0707; }
.tab { display: flex; align-items: center; justify-content: center; font: 400 22px Inter, sans-serif; }
.tab-a { position: relative; width: 1323px; background: #1e1815; border: 2px solid #000; border-width: 2px 1px 0 0; color: #6b6562; gap: 10px; }
.sound { position: absolute; right: 9px; top: 16px; }
.tab-b { flex: 1; background: #352928; color: #756b69; gap: 13px; padding: 2px 0 0 5px; }

/* Page */
.site { width: 2340px; margin: 0 auto 0 154px; }
.banner { position: relative; height: 339px; overflow: hidden; }
.banner-bg { position: absolute; inset: 0; width: 2340px; height: 339px; }
.brand-row { position: relative; display: flex; height: 241px; padding: 39px 0 0 42px; }
.rshield { width: 119px; height: 144px; }
.brand { width: 406px; height: 144px; margin-left: 14px; }
.army { width: 133px; height: 162px; margin-left: 1009px; }
.seal { width: 162px; height: 162px; margin-left: 257px; }
.social {
  position: relative;
  height: 98px;
  margin-left: 1367px;
  padding: 2px 0 8px 226px;
  display: flex;
  align-items: center;
  background: #3d4822;
  clip-path: polygon(62px 0, 100% 0, 100% 100%, 0 100%);
  color: #fff;
  font-size: 27px;
  letter-spacing: -.3px;
}
.social a:first-child { width: 214px; }
.social .tight { letter-spacing: -.8px; }
.fb, .tw { width: 46px; height: 46px; }
.fb { margin-right: 7px; }
.tw { margin: 0 7px; }

.mainnav { height: 100px; padding: 0 30px 0 60px; display: flex; background: #5e7233; color: #fff; font-size: 28px; }
.item { display: flex; align-items: center; padding: 0 31px 0 30px; border-right: 2px solid #47562a; box-shadow: inset -2px 0 #7b8c56; white-space: nowrap; }
.item:first-child { padding-right: 33px; }
.item.wide { letter-spacing: -.06px; }
.item.last { border-right: 0; box-shadow: none; }
.mainnav .item.last:last-child { padding: 0 30px 0 28px; }
.user { letter-spacing: -.47px; padding-right: 33px; }
.user svg { width: 28px; height: 28px; margin-right: 8px; }
.grow { flex: 1; }

.alert {
  margin: 40px 60px 0;
  height: 144px;
  padding: 20px 25px 0 20px;
  display: flex;
  background: #e1efdb;
  border: 2px solid #d7e8c8;
  border-radius: 8px;
  color: #55894f;
}
.ok { width: 66px; height: 80px; margin-right: 14px; }
.alert p { flex: none; margin: 11px 0 0; width: 2057px; font-size: 28px; line-height: 40px; font-weight: 700; text-align: justify; }
.close { width: 32px; margin-left: 4px; font-size: 42px; line-height: 65px; color: #b9c8b4; -webkit-text-stroke: 2px #b9c8b4; }

.rule { height: 10px; margin: 60px 30px 0; border: 0; background: #3d4822; }
.logos { display: flex; padding: 47px 0 0 246px; height: 182px; }
.l1 { width: 421px; height: 88px; }
.l2 { width: 352px; height: 88px; margin: 2px 0 0 190px; }
.l3 { width: 264px; height: 72px; margin: 14px 0 0 188px; }
.l4 { width: 240px; height: 72px; margin: 14px 0 0 188px; }
.contact { display: flex; flex-direction: column; align-items: center; padding-right: 8px; font-style: normal; font-size: 28px; line-height: 40px; color: #3d4822; letter-spacing: .1px; }
.contact b { letter-spacing: -.02px; }
.contact .phone { letter-spacing: .01px; }

/* Dock */
.dock {
  width: 1892px;
  height: 153px;
  margin: 2px 0 0 474px;
  padding: 20px 27px 0 20px;
  display: flex;
  border: 2px solid rgba(255, 255, 255, .22);
  border-radius: 46px;
  background: linear-gradient(90deg, #2a1426 0, #3c1424 170px, #4e1a33 460px, #5f2122 620px, #5f2020 690px, #4a1426 830px, #421528 1080px, #4c1a32 1240px, #521c3a 1400px, #4a182f 1640px, #5c1f2a 1800px, #641f26 1892px);
  box-shadow: 0 0 46px rgba(0, 0, 0, .3);
  position: relative;
}
.app { width: 98px; height: 98px; margin-right: 32px; position: relative; }
.app > svg { height: 98px; }
.app.on::after { content: ""; position: absolute; left: 44px; top: 117px; width: 9px; height: 9px; border-radius: 50%; background: #cf9fb2; }
.launchpad { width: 98px; height: 98px; border-radius: 23px; background: #c0b0b7; padding: 16px; display: grid; grid-template-columns: repeat(3, 18px); gap: 6px; }
.launchpad i { border-radius: 4px; height: 18px; }
.c1 { background: #7ae85e; } .c2 { background: #f2bd3e; } .c3 { background: #e68a34; }
.c4 { background: #c93427; } .c5 { background: #989ca0; } .c6 { background: #ea4b62; }
.c7 { background: #8c3bc8; } .c8 { background: #3a8cf0; } .c9 { background: #63c8a0; }
.petals rect { mix-blend-mode: multiply; opacity: .9; }
.cal { border-radius: 23px; overflow: hidden; background: #f8f7f5; text-align: center; font-family: Inter, sans-serif; display: flex; flex-direction: column; }
.cal b { background: #e5604f; color: #fff; font-size: 18px; line-height: 33px; height: 30px; font-weight: 600; }
.cal span { font-size: 59px; line-height: 64px; font-weight: 300; color: #222; letter-spacing: -1px; }
.sep { width: 2px; height: 112px; margin: -2px 36px 0 15px; background: #8a5876; }
.mini { width: 114px; height: 104px; margin-right: 16px; }
.mini svg { width: 114px; height: 98px; overflow: visible; }
.trash { margin: -10px 0 0 13px; }
.trash svg { width: 88px; height: 114px; }
```
